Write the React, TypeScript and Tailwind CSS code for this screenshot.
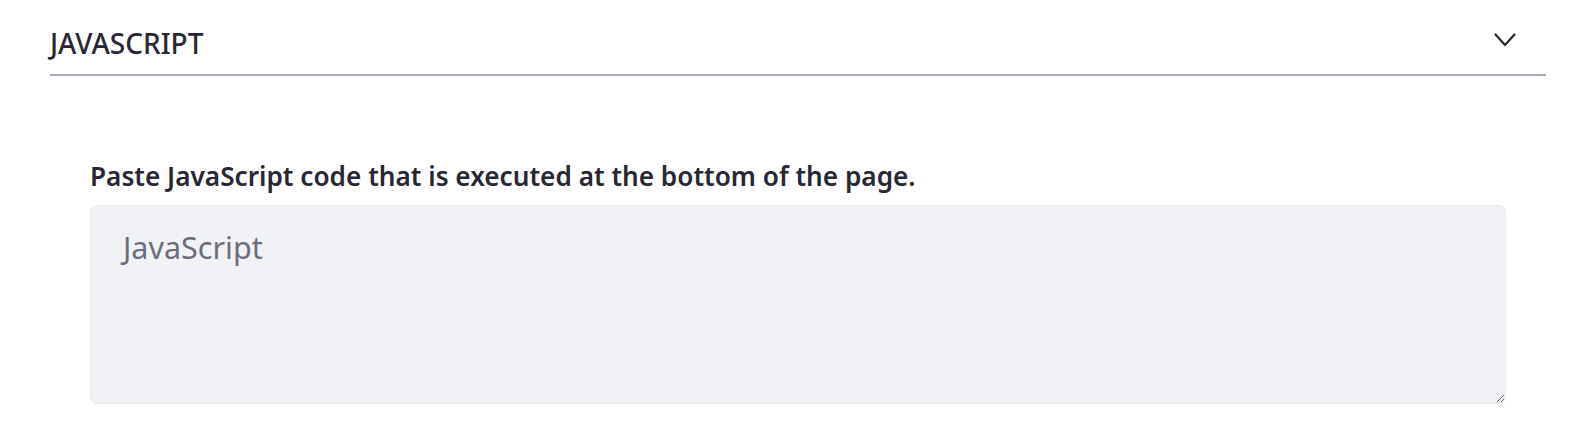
export default function App() {
  return (
    <div
      className="h-[448px] w-[1596px] bg-white text-[#272833]"
      style={{ fontFamily: '"Noto Sans", "Open Sans", sans-serif' }}
    >
      <div className="px-[50px] pt-[25px]">
        <div className="flex items-center justify-between border-b-2 border-[#a7a9bc] pb-[13px]">
          <h3 className="text-[28px] font-medium leading-[36px]">JAVASCRIPT</h3>
          <svg
            width="22"
            height="14"
            viewBox="0 0 22 14"
            fill="none"
            stroke="#272833"
            strokeWidth="2.2"
            strokeLinecap="round"
            strokeLinejoin="round"
            className="mr-[30px] mb-[6px]"
          >
            <polyline points="1.5,1.5 11,12 20.5,1.5" />
          </svg>
        </div>
      </div>

      <div className="px-[90px] pt-[82px]">
        <label className="mb-[11px] block text-[26.2px] font-semibold leading-[36px]">
          Paste JavaScript code that is executed at the bottom of the page.
        </label>
        <textarea
          placeholder="JavaScript"
          className="block h-[199px] w-full resize-y rounded-[7px] border border-[#e7e7ed] bg-[#f1f2f5] px-[32px] pt-[20px] pb-[8px] text-[30.5px] leading-[42px] text-[#272833] placeholder:text-[#6b6c7e] focus:outline-none"
          style={{ fontFamily: '"Noto Sans", "Open Sans", sans-serif' }}
        />
      </div>
    </div>
  );
}
